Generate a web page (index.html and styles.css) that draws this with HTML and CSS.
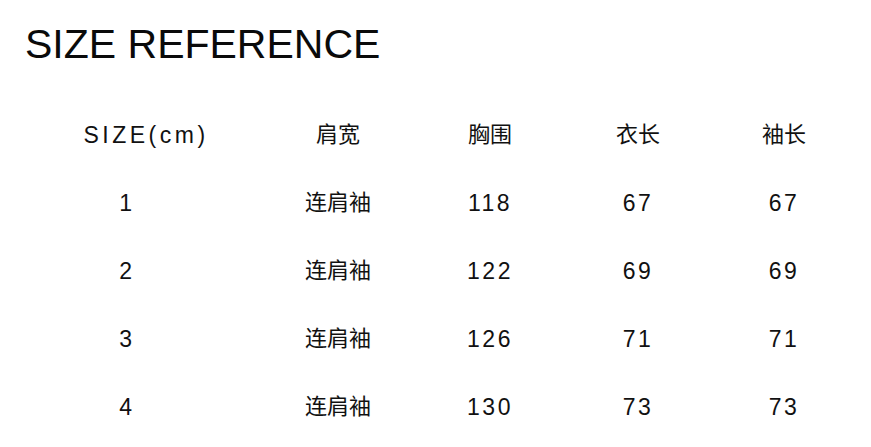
FILE: index.html
```html
<!DOCTYPE html>
<html lang="zh">
<head>
<meta charset="utf-8">
<link rel="stylesheet" href="styles.css">
</head>
<body>
<h1 class="title">SIZE REFERENCE</h1>
<div class="table">
  <div class="cell head latin first">SIZE(cm)</div>
  <div class="cell head c2">肩宽</div>
  <div class="cell head">胸围</div>
  <div class="cell head">衣长</div>
  <div class="cell head">袖长</div>

  <div class="cell num">1</div>
  <div class="cell c2">连肩袖</div>
  <div class="cell num">118</div>
  <div class="cell num">67</div>
  <div class="cell num">67</div>

  <div class="cell num">2</div>
  <div class="cell c2">连肩袖</div>
  <div class="cell num">122</div>
  <div class="cell num">69</div>
  <div class="cell num">69</div>

  <div class="cell num">3</div>
  <div class="cell c2">连肩袖</div>
  <div class="cell num">126</div>
  <div class="cell num">71</div>
  <div class="cell num">71</div>

  <div class="cell num">4</div>
  <div class="cell c2">连肩袖</div>
  <div class="cell num">130</div>
  <div class="cell num">73</div>
  <div class="cell num">73</div>
</div>
</body>
</html>
```

FILE: styles.css
```css
html, body {
  margin: 0;
  padding: 0;
  background: #ffffff;
}

body {
  font-family: "Liberation Sans", "Noto Sans CJK SC", sans-serif;
  color: #111111;
}

.title {
  margin: 20px 0 0 0;
  padding-left: 25px;
  font-size: 41px;
  line-height: 48px;
  font-weight: normal;
  color: #0a0a0a;
}

.table {
  display: grid;
  grid-template-columns: 210px 183px 150px 146px 146px;
  grid-auto-rows: 68px;
  margin: 33px 0 0 22px;
}

.cell {
  display: flex;
  align-items: center;
  justify-content: center;
  font-size: 22px;
  line-height: 26px;
  white-space: nowrap;
}

.num, .latin {
  font-size: 23px;
  letter-spacing: 2.5px;
}

.latin {
  letter-spacing: 3.5px;
}

.c2 {
  padding-left: 29px;
}

.first {
  padding-left: 38px;
}
```
